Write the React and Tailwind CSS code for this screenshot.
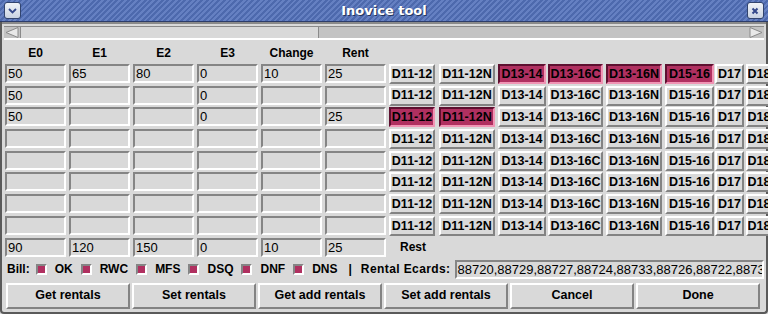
import { Fragment } from 'react';

const cols = ['E0', 'E1', 'E2', 'E3', 'Change', 'Rent'];

const rows = [
  ['50', '65', '80', '0', '10', '25'],
  ['50', '', '', '0', '', ''],
  ['50', '', '', '0', '', '25'],
  ['', '', '', '', '', ''],
  ['', '', '', '', '', ''],
  ['', '', '', '', '', ''],
  ['', '', '', '', '', ''],
  ['', '', '', '', '', ''],
];

const totals = ['90', '120', '150', '0', '10', '25'];

// label, width, right margin
const dcols = [
  { t: 'D11-12', w: 'w-[46px]', mr: 'mr-[4px]' },
  { t: 'D11-12N', w: 'w-[56px]', mr: 'mr-[3px]' },
  { t: 'D13-14', w: 'w-[48px]', mr: 'mr-[2px]' },
  { t: 'D13-16C', w: 'w-[55px]', mr: 'mr-[3px]' },
  { t: 'D13-16N', w: 'w-[56px]', mr: 'mr-[3px]' },
  { t: 'D15-16', w: 'w-[49px]', mr: 'mr-[1px]' },
  { t: 'D17', w: 'w-[29px]', mr: 'mr-[2px]' },
  { t: 'D18', w: 'w-[26px]', mr: 'mr-0' },
];

const selected = {
  0: [2, 3, 4, 5],
  2: [0, 1],
};

const bills = ['OK', 'RWC', 'MFS', 'DSQ', 'DNF', 'DNS'];

const actions = ['Get rentals', 'Set rentals', 'Get add rentals', 'Set add rentals', 'Cancel', 'Done'];

function Entry({ value, className = '' }) {
  return (
    <div
      className={`h-[19px] w-[61px] shrink-0 border-2 border-t-[#858585] border-l-[#858585] border-b-white border-r-white bg-[#d9d9d9] pl-[1px] text-[13px] leading-[15px] text-black ${className}`}
    >
      {value}
    </div>
  );
}

function DButton({ c, on }) {
  const base = `h-[20px] ${c.w} ${c.mr} shrink-0 border-2 flex items-center justify-center text-[12.5px] font-bold leading-none overflow-hidden whitespace-nowrap`;
  if (on) {
    return (
      <div className={`${base} bg-[#b03060] border-t-[#5e1030] border-l-[#5e1030] border-b-[#f094b4] border-r-[#f094b4] text-black`}>
        {c.t}
      </div>
    );
  }
  return (
    <div className={`${base} bg-[#d9d9d9] border-t-white border-l-white border-b-[#838383] border-r-[#838383] text-black`}>
      {c.t}
    </div>
  );
}

function Check({ label }) {
  return (
    <div className="flex items-center mr-[8px]">
      <span className="w-[11px] h-[11px] border-2 border-t-[#858585] border-l-[#858585] border-b-white border-r-white bg-[#b03060]" />
      <span className="ml-[8px]">{label}</span>
    </div>
  );
}

export default function App() {
  return (
    <div className="w-[768px] h-[314px] overflow-hidden bg-[#d9d9d9] font-['Liberation_Sans',Arial,sans-serif] text-black select-none">
      {/* title bar */}
      <div className="h-[22px] flex items-center justify-between px-[4px] border-b border-[#2c3c6a] bg-[repeating-linear-gradient(135deg,#6580c2_0px,#6580c2_2px,#4d69ad_2px,#4d69ad_4px)]">
        <div className="w-[17px] h-[17px] rounded-[3px] border border-[#32446e] bg-[linear-gradient(#f0f3f8,#c8d2e2)] flex items-center justify-center">
          <svg width="9" height="6" viewBox="0 0 9 6">
            <path d="M1 1 L4.5 4.5 L8 1" fill="none" stroke="#34488a" strokeWidth="1.8" />
          </svg>
        </div>
        <div className="text-white font-bold text-[13px] [text-shadow:1px_1px_0_#23345c] font-['DejaVu_Sans',sans-serif]">
          Inovice tool
        </div>
        <div className="w-[17px] h-[17px] rounded-[3px] border border-[#32446e] bg-[linear-gradient(#f0f3f8,#c8d2e2)] flex items-center justify-center">
          <svg width="8" height="8" viewBox="0 0 8 8">
            <path d="M1.5 1.5 L6.5 6.5 M6.5 1.5 L1.5 6.5" stroke="#34488a" strokeWidth="2" />
          </svg>
        </div>
      </div>

      <div className="h-[292px] border-l-2 border-r-2 border-b-2 border-[#5a5a5a] rounded-b-[4px] flex flex-col">
        <div className="h-[2px] bg-[#8a8a8a]" />
        {/* scrollbar */}
        <div className="mx-[2px] mt-[2px] h-[14px] flex bg-[#c3c3c3] border-t border-[#8a8a8a] border-b-2 border-b-white">
          <div className="w-[16px] h-full flex items-center justify-center">
            <svg width="14" height="11" viewBox="0 0 14 11">
              <path d="M13 0.5 L1 5.5 L13 10.5 Z" fill="#e8e8e8" stroke="#8a8a8a" />
            </svg>
          </div>
          <div className="w-[299px] h-full bg-[#d9d9d9] border-l border-r border-[#8a8a8a]" />
          <div className="flex-1" />
          <div className="w-[16px] h-full flex items-center justify-center">
            <svg width="14" height="11" viewBox="0 0 14 11">
              <path d="M1 0.5 L13 5.5 L1 10.5 Z" fill="#e8e8e8" stroke="#8a8a8a" />
            </svg>
          </div>
        </div>

        {/* header */}
        <div className="flex pl-[3px] mt-[4px] h-[17px] items-center text-[12px] font-bold">
          {cols.map((c) => (
            <div key={c} className="w-[61px] mr-[3px] text-center">
              {c}
            </div>
          ))}
        </div>

        {/* rows */}
        <div className="flex flex-col gap-[1.7px] pl-[3px] mt-[3px]">
          {rows.map((r, ri) => (
            <div key={ri} className="flex items-start h-[20px]">
              {r.map((v, ci) => (
                <Entry key={ci} value={v} className="mr-[3px]" />
              ))}
              {dcols.map((c, di) => (
                <DButton key={di} c={c} on={(selected[ri] || []).includes(di)} />
              ))}
            </div>
          ))}
        </div>

        {/* totals */}
        <div className="flex items-center pl-[3px] mt-[2px] h-[19px]">
          {totals.map((v, ci) => (
            <Entry key={ci} value={v} className="mr-[3px]" />
          ))}
          <span className="ml-[11px] text-[12px] font-bold">Rest</span>
        </div>

        {/* bill row */}
        <div className="flex items-center pl-[5px] mt-[3px] h-[19px] text-[12px] font-bold whitespace-nowrap">
          <span className="mr-[6px]">Bill:</span>
          {bills.map((b) => (
            <Fragment key={b}>
              <Check label={b} />
            </Fragment>
          ))}
          <span className="ml-[3px] mr-[9px]">|</span>
          <span className="tracking-[0.4px]">Rental Ecards:</span>
          <div className="ml-[4px] flex-1 min-w-0 mr-[2px] h-[19px] border-2 border-t-[#858585] border-l-[#858585] border-b-white border-r-white pl-[1px] font-normal text-[13px] leading-[15px] overflow-hidden">
            88720,88729,88727,88724,88733,88726,88722,88731
          </div>
        </div>

        {/* action buttons */}
        <div className="flex pl-[4px] mt-[4px] gap-[2px]">
          {actions.map((a) => (
            <div
              key={a}
              className="w-[124px] h-[26px] border-2 border-t-white border-l-white border-b-[#838383] border-r-[#838383] flex items-center justify-center text-[12.5px] font-bold"
            >
              {a}
            </div>
          ))}
        </div>
      </div>
    </div>
  );
}
